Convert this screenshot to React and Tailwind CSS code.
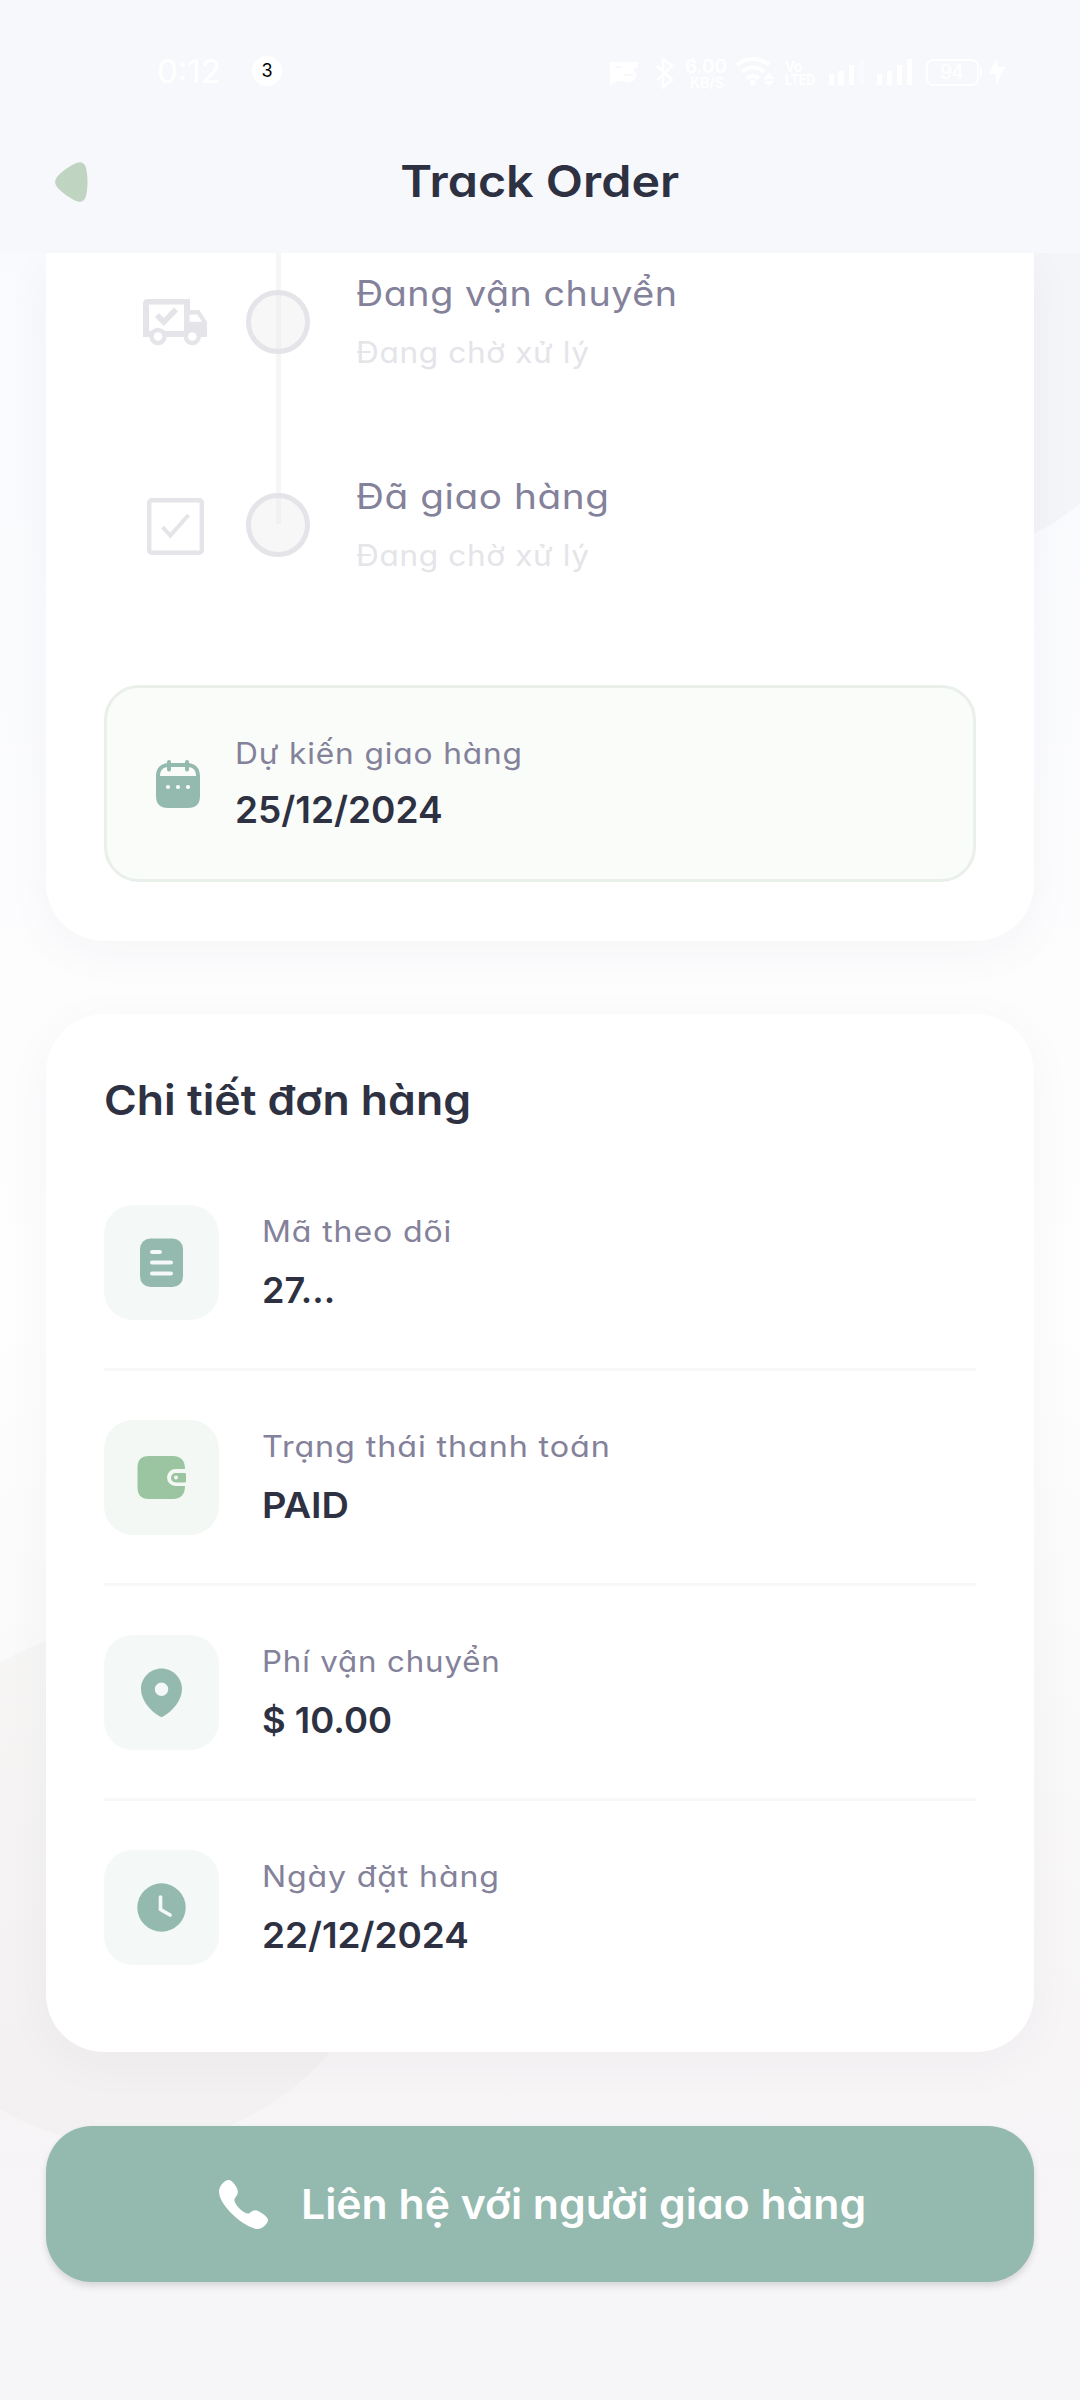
import React from "react";

const F = "font-['Inter','Noto_Sans',sans-serif] [font-feature-settings:'cv11']";

function StatusBar() {
  return (
    <div className="h-[145px] flex items-start justify-between pl-[157px] pr-[74px] pt-[53px] text-white">
      <div className="flex items-center h-[36px]">
        <span className="w-[95px] text-[33px] leading-[36px]">0:12</span>
        <span className="w-[30px] h-[30px] rounded-full bg-white text-black text-[18px] leading-[30px] text-center">3</span>
      </div>
      <svg width="396" height="54" viewBox="610 47 396 54" fill="#fff" className="-mt-[6px] overflow-visible">
        <path fillRule="evenodd" d="M610 62h28v6a10 10 0 0 0-11 13h-9l-8 4zM615 66v2h7v-2z" />
        <circle cx="628.500" cy="75" r="7.500" />
        <path d="M624 75h9" stroke="#f7f8fc" strokeWidth="2.200" />
        <path d="M657 66l15 14-9 7V59l9 7-15 14" fill="none" stroke="#fff" strokeWidth="2.600" />
        <text x="685" y="73" fontSize="18.500" fontWeight="600" textLength="42" lengthAdjust="spacingAndGlyphs">6.00</text>
        <text x="690" y="87.500" fontSize="14" fontWeight="600" textLength="34" lengthAdjust="spacingAndGlyphs">KB/S</text>
        <path d="M737 65a24 24 0 0 1 32 0M742 72a16 16 0 0 1 22 0M747 78.500a9 9 0 0 1 12 0" fill="none" stroke="#fff" strokeWidth="4" />
        <circle cx="753" cy="82.500" r="2.800" />
        <path d="M764 79l5-6 5 6zM764 81l5 5 5-5z" />
        <text x="785" y="71.500" fontSize="15" fontWeight="700" textLength="17" lengthAdjust="spacingAndGlyphs">Vo</text>
        <text x="785" y="85" fontSize="15" fontWeight="700" textLength="30" lengthAdjust="spacingAndGlyphs">LTED</text>
        <path d="M829 74h5v11h-5zM838 71h6v14h-6zM849 65h5v20h-5zM877 74h5v11h-5zM887 71h5v14h-5zM897 65h5v20h-5zM907 59h5v26h-5z" />
        <path d="M859 59h5v26h-5z" opacity=".3" />
        <rect x="927" y="60" width="51" height="25" rx="6" fill="none" stroke="#fff" strokeWidth="2" />
        <path d="M980 67h2v10h-2z" />
        <text x="940" y="79" fontSize="20" textLength="24">94</text>
        <path d="M996 59l-7 15h7v11l9-18h-7z" />
      </svg>
    </div>
  );
}

function Header() {
  return (
    <div className="relative z-10 h-[253px] bg-[#f7f8fc]">
      <StatusBar />
      <div className="grid grid-cols-[1fr_auto_1fr] items-center h-[74px] px-[55px]">
        <svg width="33" height="40" viewBox="0 0 33 40">
          <path d="M2 15C7 9 16 3 22 .8c4-1.500 8 .4 9 5C33 14 33 26 31 34.200c-1 4.600-5 6.500-9 5C16 37 7 31 2 25c-2.400-3.200-2.400-6.800 0-10z" fill="#c0d4c2" />
        </svg>
        <h1 className="-mt-[2px] text-[44px] leading-[60px] font-semibold text-[#2d3142] scale-x-[1.1]">Track Order</h1>
      </div>
    </div>
  );
}

const Truck = () => (
  <svg width="66" height="56" viewBox="142 298 66 56" fill="#e4e4e9" className="ml-[38px] mt-[75px]">
    <path fillRule="evenodd" d="M147.500 299H190v11h9.300L207 322v15h-64v-33.500c0-2.500 2-4.500 4.500-4.500zM149 304.500V331h35v-26.500zM189.500 314.500v7.300h12.700l-5-7.300z" />
    <circle cx="158" cy="336.500" r="8.700" />
    <circle cx="158" cy="336.500" r="4.300" fill="#fff" />
    <circle cx="192.300" cy="336.500" r="8.700" />
    <circle cx="192.300" cy="336.500" r="4.300" fill="#fff" />
    <path d="M157 315l6.700 7L176 309.500" fill="none" stroke="#e4e4e9" strokeWidth="5.600" />
  </svg>
);

const Delivered = () => (
  <svg width="57" height="57" viewBox="0 0 57 57" fill="none" stroke="#e4e4e9" className="ml-[43px] mt-[72px]">
    <rect x="2.200" y="2.200" width="52.600" height="52.600" rx="2.500" strokeWidth="4.400" />
    <path d="M15.500 29l7.800 8.500L41.500 17" strokeWidth="4" />
  </svg>
);

function Step({ icon, title, titleClass, last }) {
  return (
    <div className="flex h-[203px]">
      <div className="w-[142px] shrink-0">{icon}</div>
      <div className="relative w-[64px] shrink-0">
        <div className="w-[64px] h-[64px] mt-[67px] rounded-full border-[5px] border-[#e4e4e9] bg-[#f7f7f8]" />
        <div className={last ? "absolute left-[30px] top-0 h-[98px] w-[5px] bg-[#e4e4e9]/35" : "absolute left-[30px] top-0 h-[203px] w-[5px] bg-[#e4e4e9]/35"} />
      </div>
      <div className="pl-[46px] pt-[43px] whitespace-nowrap">
        <div className={"origin-left text-[35px] leading-[54px] text-[#84819a] tracking-[0.5px] " + titleClass}>{title}</div>
        <div className="mt-[10px] origin-left scale-x-[1.07] text-[29.500px] leading-[44px] text-[#e4e4e9] tracking-[0.6px]">Đang chờ xử lý</div>
      </div>
    </div>
  );
}

const Calendar = () => (
  <svg width="44" height="48" viewBox="0 0 44 48">
    <path fillRule="evenodd" fill="#94b9af" d="M13 3h18c8 0 13 5 13 13v20c0 8-4 12-12 12H12C4 48 0 44 0 36V16C0 8 5 3 13 3zM4 16h36c0-6-3-9-9-9H13c-6 0-9 3-9 9z" />
    <path d="M13 2v7.500M31 2v7.500" stroke="#94b9af" strokeWidth="4" strokeLinecap="round" />
    <g fill="#fafcf9">
      <circle cx="12" cy="27" r="2.100" />
      <circle cx="22" cy="27" r="2.100" />
      <circle cx="32" cy="27" r="2.100" />
    </g>
  </svg>
);

const Doc = () => (
  <svg width="49" height="49" viewBox="0 0 49 49">
    <rect x="3" y=".5" width="43" height="48.500" rx="10.500" fill="#94b9af" />
    <path d="M15 14h8M15 24.500h19M15 35.500h19" stroke="#f4f8f7" strokeWidth="4" strokeLinecap="round" />
  </svg>
);

const Wallet = () => (
  <svg width="49" height="49" viewBox="0 0 49 49">
    <path d="M12 3h24c8 0 12 5 12 13H38.500a8.500 8.500 0 0 0 0 17H48c0 8-4 13-12 13H12C4 46 .5 42 .5 34V15C.5 7 4 3 12 3z" fill="#9bc4a1" />
    <path d="M39 20h8.500c1 0 1.500.5 1.500 1.500v6.500c0 1-.5 1.500-1.500 1.500H39c-3 0-5-2-5-4.700S36 20 39 20z" fill="#9bc4a1" />
    <circle cx="39" cy="24.500" r="2" fill="#f4f8f5" />
  </svg>
);

const Pin = () => (
  <svg width="49" height="49" viewBox="0 0 49 49">
    <path fillRule="evenodd" fill="#94b9af" d="M24.500.5C35.500.5 45 9.500 45 21c0 11.500-9.500 22-18.500 27.300-1.400.8-2.600.8-4 0C13.500 43 4 32.500 4 21 4 9.500 13.500.5 24.500.5zM24.500 14.500a6.700 6.700 0 1 0 0 13.400 6.700 6.700 0 0 0 0-13.400z" />
  </svg>
);

const Clock = () => (
  <svg width="49" height="49" viewBox="0 0 49 49">
    <circle cx="24.500" cy="24.500" r="24.200" fill="#94b9af" />
    <path d="M23.500 14v12.500l9.500 5.500" fill="none" stroke="#f4f8f7" strokeWidth="3.700" strokeLinecap="round" strokeLinejoin="round" />
  </svg>
);

function Row({ icon, tile, label, labelClass, value, valueClass, border }) {
  return (
    <div className={border ? "flex items-center h-[215px] pt-[49px] pb-[48px] border-b-[3px] border-[#f7f7f8]" : "flex items-center h-[215px] pt-[49px] pb-[51px]"}>
      <div className={"w-[115px] h-[115px] rounded-[29px] flex items-center justify-center shrink-0 " + tile}>{icon}</div>
      <div className="pl-[43px] whitespace-nowrap text-[29.500px]">
        <div className={"origin-left tracking-[0.8px] leading-[44px] text-[#84819a] " + labelClass}>{label}</div>
        <div className={"origin-left mt-[10px] leading-[54px] font-semibold text-[#2d3142] text-[36px] " + valueClass}>{value}</div>
      </div>
    </div>
  );
}

const CARD = "bg-white shadow-[0_11px_50px_rgba(45,49,66,0.04)]";

export default function App() {
  return (
    <div className={"relative w-[1080px] h-[2400px] overflow-hidden bg-[linear-gradient(180deg,#f7f9fd_0%,#fdfdfe_42%,#fefefe_55%,#f7f5f6_85%,#f6f5f8_100%)] " + F}>
      <div className="absolute left-[612px] top-[-9px] w-[576px] h-[576px] rounded-full bg-[#f3f5f8]" />
      <div className="absolute left-[-128px] top-[1627px] w-[518px] h-[518px] rounded-full bg-[#94998a]/[0.04]" />
      <Header />
      <main className="relative px-[46px]">
        <section className={"flex flex-col h-[688px] rounded-b-[58px] px-[58px] " + CARD}>
          <div className="-mt-[30px]">
            <Step icon={<Truck />} title="Đang vận chuyển" titleClass="scale-x-[1.077]" />
            <Step last icon={<Delivered />} title="Đã giao hàng" titleClass="scale-x-[1.107]" />
          </div>
          <div className="mt-[56px] h-[197px] shrink-0 rounded-[35px] border-[3px] border-[#e9efe9] bg-[#fafcf9] flex items-center pl-[49px] gap-[35px]">
            <Calendar />
            <div className="text-[29.500px] whitespace-nowrap">
              <div className="origin-left scale-x-[1.074] leading-[44px] text-[#84819a] tracking-[0.8px]">Dự kiến giao hàng</div>
              <div className="mt-[8px] text-[37px] leading-[54px] font-semibold text-[#2d3142]">25/12/2024</div>
            </div>
          </div>
        </section>
        <section className={"mt-[73px] h-[1038px] rounded-[58px] px-[58px] pt-[56px] " + CARD}>
          <h2 className="origin-left scale-x-[1.086] text-[41px] leading-[60px] font-semibold text-[#2d3142] whitespace-nowrap w-[500px]">Chi tiết đơn hàng</h2>
          <div className="mt-[26px]">
            <Row border icon={<Doc />} tile="bg-[#f4f8f7]" label="Mã theo dõi" labelClass="scale-x-[1.087]" value="27..." valueClass="" />
            <Row border icon={<Wallet />} tile="bg-[#f4f8f5]" label="Trạng thái thanh toán" labelClass="scale-x-[1.096]" value="PAID" valueClass="scale-x-[1.055]" />
            <Row border icon={<Pin />} tile="bg-[#f4f8f7]" label="Phí vận chuyển" labelClass="scale-x-[1.06]" value="$ 10.00" valueClass="scale-x-[1.012]" />
            <Row icon={<Clock />} tile="bg-[#f4f8f7]" label="Ngày đặt hàng" labelClass="scale-x-[1.087]" value="22/12/2024" valueClass="scale-x-[1.025]" />
          </div>
        </section>
        <button className="mt-[74px] w-full h-[156px] rounded-[46px] bg-[#94b9af] shadow-[0_4px_7px_rgba(0,0,0,0.13)] flex items-center pl-[173px] gap-[33px] text-white">
          <svg width="49" height="49" viewBox="0 0 49 49" fill="#fff">
            <path d="M9.500 0C12 0 14 2 16 5c2.500 3.500 3.500 6 2.500 9s-3.700 4-3 7c1 4.500 8.500 12 13 12.500 2.500.5 4.500-4 8.500-3.300C40 31 49 36 49 40s-6 9-10.500 9C28 49 0 27 0 11.500 0 6 5.500 0 9.500 0z" />
          </svg>
          <span className="origin-left scale-x-[1.042] text-[41px] leading-[60px] font-semibold whitespace-nowrap">Liên hệ với người giao hàng</span>
        </button>
      </main>
    </div>
  );
}
